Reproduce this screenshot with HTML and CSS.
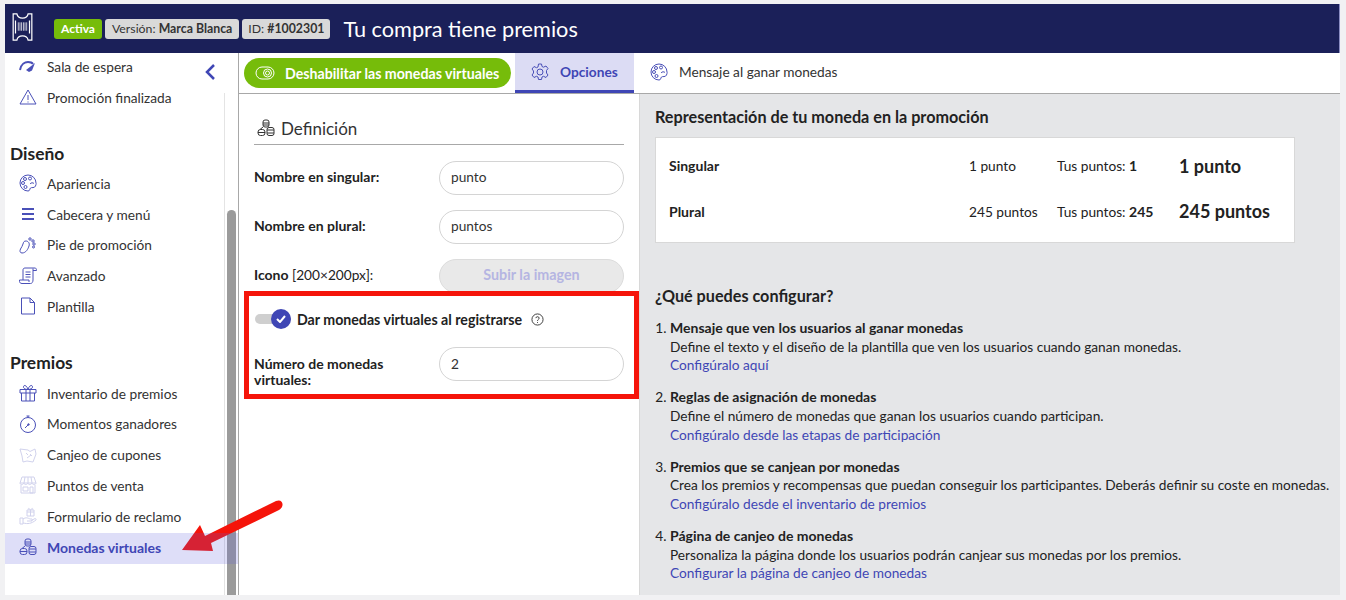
FILE: index.html
```html
<!DOCTYPE html>
<html lang="es">
<head>
    <meta charset="UTF-8">
    <title>Tu compra tiene premios</title>
    <link rel="stylesheet" href="styles.css">
</head>
<body>
    <!-- iconos reutilizados -->
    <svg class="sprite">
        <symbol id="i-coins" viewBox="0 0 18 18">
            <rect x="6" y="1" width="6" height="7" rx="2"/>
            <path d="M6 4h6M6 6h6"/>
            <rect x="1" y="10.500" width="7" height="6" rx="2.500"/>
            <path d="M1 13.500h7"/>
            <rect x="10" y="8.500" width="7" height="8" rx="2"/>
            <path d="M10 11h7M10 14h7M3 10.500 6 8"/>
        </symbol>
        <symbol id="i-palette" viewBox="0 0 18 18">
            <path d="M9 1a8 8 0 1 0 0 16c2 0 1.500-2 2.500-3s4 .5 5-2 .5-3 .5-3a8 8 0 0 0-8-8z"/>
            <circle cx="6" cy="5" r="1.500"/>
            <circle cx="11" cy="4.500" r="1.500"/>
            <circle cx="4" cy="9" r="1.500"/>
            <circle cx="6.500" cy="13" r="1.500"/>
            <path d="M11 10c1-1.500 3-1.500 4-.5"/>
        </symbol>
    </svg>

    <div class="page">
        <!-- Cabecera -->
        <header class="topbar">
            <svg class="logo" viewBox="0 0 22 30">
                <path d="M1 1h4c.5 3 3 4.500 6 4.500S16.500 4 17 1h4v28h-4c-.5-3-3-4.500-6-4.500S5.500 26 5 29H1z"/>
                <path d="M3.500 8v14M18.500 8v14"/>
                <path class="bars" d="M6.500 10v9M8.300 10v9M10 10v9M12 10v9M13.700 10v9M15.500 10v9"/>
            </svg>
            <span class="badge badge-green">Activa</span>
            <span class="badge">Versión: <b>Marca Blanca</b></span>
            <span class="badge badge-id">ID: <b>#1002301</b></span>
            <h1 class="title">Tu compra tiene premios</h1>
        </header>

        <div class="main">
            <!-- Menú lateral -->
            <nav class="sidebar">
                <div class="rail"></div>
                <div class="thumb"></div>
                <svg class="collapse" viewBox="0 0 12 18"><path d="M10 2 3 9l7 7"/></svg>

                <a class="item">
                    <svg class="icon" viewBox="0 0 18 18"><path class="thick" d="M1 13C2 7 6 5 9 5c2 0 4 .5 5 2"/><path class="solid" d="M7 13l9-7-3 7.500-3 1.500z"/></svg>
                    Sala de espera
                </a>
                <a class="item">
                    <svg class="icon" viewBox="0 0 18 18"><path d="M9 2 1 16h16zM9 7v5M9 13.500v1"/></svg>
                    Promoción finalizada
                </a>

                <h2 class="group">Diseño</h2>
                <a class="item">
                    <svg class="icon"><use href="#i-palette"/></svg>
                    Apariencia
                </a>
                <a class="item">
                    <svg class="icon icon-bold" viewBox="0 0 18 18"><path d="M3 4h12M3 9h12M3 14h12"/></svg>
                    Cabecera y menú
                </a>
                <a class="item">
                    <svg class="icon" viewBox="0 0 18 18"><path d="M3 17c-2 0-2.500-2-1.500-4s2-3 2.500-5 1-3 3-3 4 2 3 5-3 7-7 7z"/><circle cx="11" cy="3" r="1.200"/><circle cx="14" cy="5" r="1.200"/><circle cx="15" cy="8" r="1.200"/><circle cx="14.500" cy="11" r="1"/></svg>
                    Pie de promoción
                </a>
                <a class="item">
                    <svg class="icon" viewBox="0 0 18 18"><path d="M4 13V3c0-1 .5-2 2-2h10c1 0 1.500 1 1.500 2.500H14M14 1.500V13c0 2-1 3.500-2.500 3.500H3c-1.500 0-2.500-1-2.500-2V13H10v2M6.500 5h5M6.500 7.500h5M6.500 10h5"/></svg>
                    Avanzado
                </a>
                <a class="item">
                    <svg class="icon" viewBox="0 0 18 18"><path d="M2.500 1H11l4.500 4.500V17h-13zM11 1v4.500h4.500"/></svg>
                    Plantilla
                </a>

                <h2 class="group group-last">Premios</h2>
                <a class="item">
                    <svg class="icon" viewBox="0 0 18 18"><path d="M1 5.500h16v3.500H1zM2.500 9v8h13V9M7 5.500V17M11 5.500V17M9 5.500C7 5.500 4 4.500 4.500 2.500S8 1.500 9 5.500zM9 5.500c2 0 5-1 4.500-3S10 1.500 9 5.500z"/></svg>
                    Inventario de premios
                </a>
                <a class="item">
                    <svg class="icon" viewBox="0 0 18 18"><circle cx="9" cy="10" r="7.500"/><path d="M7.500 1h3M9 1v1.500M6 13l4-4"/><circle cx="9.500" cy="9.500" r=".8"/></svg>
                    Momentos ganadores
                </a>
                <a class="item item-faded">
                    <svg class="icon" viewBox="0 0 18 18"><path d="M1 3l8 1 2 1.500L16 3l1 5-3 8-6-1-4 1-1-6zM7 7l2 2M11 8l2 2M8 12l4-3"/></svg>
                    Canjeo de cupones
                </a>
                <a class="item item-faded">
                    <svg class="icon" viewBox="0 0 18 18"><path d="M3 1h12l2 6H1zM1 7c0 2 3 2 4 0 0 2 3 2 4 0 0 2 3 2 4 0 0 2 4 2 4 0M2 9v8h14V9M4 11h5v4H4zM11 11h3v6h-3zM6 1 5 7M9 1v6M12 1l1 6"/></svg>
                    Puntos de venta
                </a>
                <a class="item item-faded">
                    <svg class="icon" viewBox="0 0 18 18"><path d="M1 11h3v6H1zM4 12c3-2 5-1 7 0h2c1 1 0 2-1 2H8M4 16c5 1 8 1 13-3 .5-1-.5-2-2-1l-3 2M8 3h7v6H8zM11.500 3v6M8 5h7M11.500 3C10 1 9 1 9.500 2.500M11.500 3c1.500-2 2.500-2 2-.5"/></svg>
                    Formulario de reclamo
                </a>
                <a class="item item-active">
                    <svg class="icon"><use href="#i-coins"/></svg>
                    Monedas virtuales
                </a>
            </nav>

            <section class="content">
                <!-- Pestañas -->
                <div class="tabs">
                    <button class="toggle-btn">
                        <svg viewBox="0 0 20 14"><rect x="1" y="1" width="18" height="12" rx="6"/><circle cx="12.500" cy="7" r="4"/><circle cx="12.500" cy="7" r="2"/></svg>
                        Deshabilitar las monedas virtuales
                    </button>
                    <a class="tab tab-active">
                        <svg class="tab-icon" viewBox="0 0 18 18"><path d="M7.500 1h3l.5 2.500 1.500.7L15 3l2 2.500-1.500 2v2.500l1.500 2-2 2.500-2.500-1.200-1.500.7-.5 2.500h-3L7 14l-1.500-.7L3 14.500 1 12l1.500-2V8L1 6l2-2.500 2.500 1.200L7 4z"/><circle cx="9" cy="9" r="3"/></svg>
                        Opciones
                    </a>
                    <a class="tab">
                        <svg class="tab-icon"><use href="#i-palette"/></svg>
                        Mensaje al ganar monedas
                    </a>
                </div>

                <div class="columns">
                    <!-- Columna del formulario -->
                    <div class="form-col">
                        <h3 class="form-title">
                            <svg class="title-icon"><use href="#i-coins"/></svg>
                            Definición
                        </h3>
                        <div class="field">
                            <label class="field-label">Nombre en singular:</label>
                            <div class="input">punto</div>
                        </div>
                        <div class="field">
                            <label class="field-label">Nombre en plural:</label>
                            <div class="input">puntos</div>
                        </div>
                        <div class="field">
                            <label class="field-label">Icono <span class="hint">[200×200px]:</span></label>
                            <div class="upload">Subir la imagen</div>
                        </div>

                        <!-- Recuadro rojo de la captura -->
                        <div class="highlight">
                            <div class="switch-row">
                                <span class="switch">
                                    <span class="knob">
                                        <svg viewBox="0 0 10 8"><path d="M1 4l3 3 5-6"/></svg>
                                    </span>
                                </span>
                                <strong>Dar monedas virtuales al registrarse</strong>
                                <svg class="help" viewBox="0 0 14 14"><circle cx="7" cy="7" r="6"/><path d="M5.200 5.500C5.200 3.500 8.800 3.500 8.800 5.500 8.800 7 7 6.800 7 8.500M7 9.800v1"/></svg>
                            </div>
                            <div class="field field-last">
                                <label class="field-label">Número de monedas virtuales:</label>
                                <div class="input">2</div>
                            </div>
                        </div>
                    </div>

                    <!-- Columna de información -->
                    <div class="info-col">
                        <h3 class="info-title">Representación de tu moneda en la promoción</h3>
                        <div class="preview">
                            <div class="preview-row">
                                <b class="preview-name">Singular</b>
                                <span class="preview-plain">1 punto</span>
                                <span class="preview-user">Tus puntos: <b>1</b></span>
                                <span class="preview-big">1 punto</span>
                            </div>
                            <div class="preview-row">
                                <b class="preview-name">Plural</b>
                                <span class="preview-plain">245 puntos</span>
                                <span class="preview-user">Tus puntos: <b>245</b></span>
                                <span class="preview-big">245 puntos</span>
                            </div>
                        </div>

                        <h3 class="help-title">¿Qué puedes configurar?</h3>
                        <ol class="steps">
                            <li>
                                <b>Mensaje que ven los usuarios al ganar monedas</b>
                                <p>Define el texto y el diseño de la plantilla que ven los usuarios cuando ganan monedas.</p>
                                <a>Configúralo aquí</a>
                            </li>
                            <li>
                                <b>Reglas de asignación de monedas</b>
                                <p>Define el número de monedas que ganan los usuarios cuando participan.</p>
                                <a>Configúralo desde las etapas de participación</a>
                            </li>
                            <li>
                                <b>Premios que se canjean por monedas</b>
                                <p>Crea los premios y recompensas que puedan conseguir los participantes. Deberás definir su coste en monedas.</p>
                                <a>Configúralo desde el inventario de premios</a>
                            </li>
                            <li>
                                <b>Página de canjeo de monedas</b>
                                <p>Personaliza la página donde los usuarios podrán canjear sus monedas por los premios.</p>
                                <a>Configurar la página de canjeo de monedas</a>
                            </li>
                        </ol>
                    </div>
                </div>
            </section>
        </div>

        <!-- Flecha roja de la captura -->
        <svg class="arrow" viewBox="0 0 110 70">
            <path d="M2 53 20 28 25 39 96 4C103 1 105 10 99 13L31 46 33 54z"/>
        </svg>
    </div>
</body>
</html>
```

FILE: styles.css
```css
/* Página */
* {
    box-sizing: border-box;
}

body {
    margin: 0;
    background: #f1f1f3;
    color: #222;
    font-family: "Lato", "Noto Sans", sans-serif;
    font-size: 13.7px;
    overflow: hidden;
}

b,
strong {
    font-size: 14px;
}

.sprite {
    display: none;
}

.page {
    position: relative;
    width: 1346px;
    height: 600px;
    padding: 4px 6px 5px 5px;
    display: flex;
    flex-direction: column;
}

/* Cabecera */
.topbar {
    height: 49px;
    flex: none;
    background: #1b2059;
    border-right: 1px solid #8b8dc4;
    display: flex;
    align-items: center;
    padding-left: 7px;
}

.logo {
    width: 21px;
    height: 28px;
    margin: 0 21px 3px 0;
    fill: none;
    stroke: #fff;
    stroke-width: 1.3;
}

.bars {
    stroke-width: .8;
}

.badge {
    height: 20px;
    line-height: 20px;
    padding: 0 7px;
    margin-right: 3px;
    border-radius: 3px;
    background: #d9d9d9;
    color: #333;
    font-size: 12.300px;
    white-space: nowrap;
}

.badge b {
    font-size: 12.300px;
}

.badge-id {
    padding: 0 6px;
}

.badge-green {
    background: #76bc0a;
    color: #fff;
    font-size: 12px;
    font-weight: 700;
}

.title {
    margin: 0 0 0 10px;
    color: #fff;
    font-size: 21.700px;
    font-weight: 400;
}

.main {
    flex: 1;
    display: flex;
    min-height: 0;
    background: #fff;
}

/* Menú lateral */
.sidebar {
    position: relative;
    width: 234px;
    flex: none;
    border-right: 1px solid #a8a8a8;
    overflow: hidden;
}

.rail {
    position: absolute;
    left: 219px;
    top: 40px;
    bottom: 0;
    width: 1px;
    background: #e4e4e4;
}

.thumb {
    position: absolute;
    left: 222px;
    top: 157px;
    bottom: 0;
    width: 9px;
    background: #9b9b9b;
    border-radius: 5px 5px 0 0;
}

.collapse {
    position: absolute;
    left: 199px;
    top: 10px;
    width: 12px;
    height: 18px;
    fill: none;
    stroke: #3f46b5;
    stroke-width: 2.500;
}

.item {
    position: relative;
    z-index: 1;
    display: flex;
    align-items: center;
    height: 30.750px;
    padding: 0 0 2px 14px;
    color: #333;
}

.item:first-of-type {
    margin-top: -1px;
}

.icon {
    width: 18px;
    height: 18px;
    margin-right: 10px;
    flex: none;
    fill: none;
    stroke: #4a50b8;
    stroke-width: 1;
}

.icon-bold {
    stroke-width: 2;
}

.thick {
    stroke-width: 2;
}

.solid {
    fill: #4a50b8;
    stroke: none;
}

.item-faded .icon {
    opacity: .25;
}

.item-active {
    height: 31.500px;
    background: rgba(88, 88, 222, .2);
    color: #3f46b5;
    font-size: 14px;
    font-weight: 700;
}

.group {
    margin: 25.500px 0 0 5px;
    height: 30px;
    line-height: 30px;
    font-size: 17.400px;
    font-weight: 700;
    color: #222;
}

.group-last {
    margin-top: 26px;
    line-height: 28px;
}

/* Pestañas */
.content {
    flex: 1;
    min-width: 0;
    display: flex;
    flex-direction: column;
}

.tabs {
    height: 41px;
    flex: none;
    display: flex;
    border-bottom: 1px solid #a8a8a8;
    padding-left: 5px;
}

.toggle-btn {
    height: 30px;
    width: 267px;
    margin: 5px 4px 0 0;
    border: none;
    border-radius: 16px;
    background: #76bc0a;
    color: #fff;
    font: 700 14.200px "Lato", "Noto Sans", sans-serif;
    display: flex;
    align-items: center;
    padding-left: 11px;
    gap: 10px;
}

.toggle-btn svg {
    width: 20px;
    height: 14px;
    fill: none;
    stroke: #fff;
    stroke-width: 1;
}

.tab {
    display: flex;
    align-items: center;
    gap: 11px;
    padding: 0 15px 3px 16px;
    height: 40px;
    color: #333;
}

.tab-active {
    padding-bottom: 0;
    background: #dcdcf4;
    border-bottom: 3px solid #3f46b5;
    color: #3f46b5;
    font-weight: 700;
    width: 119px;
}

.tab-icon {
    width: 18px;
    height: 18px;
    fill: none;
    stroke: #4a50b8;
    stroke-width: 1;
}

.columns {
    flex: 1;
    display: flex;
    min-height: 0;
}

/* Formulario */
.form-col {
    width: 401px;
    flex: none;
    border-right: 1px solid #d8d8d8;
    padding: 0 15px;
}

.form-title {
    margin: 23px 0 16px;
    height: 28px;
    border-bottom: 1px solid #a8a8a8;
    font-size: 17px;
    font-weight: 400;
    color: #333;
    display: flex;
    align-items: flex-start;
    gap: 6px;
    padding-left: 3px;
    line-height: 24px;
}

.title-icon {
    width: 18px;
    height: 18px;
    margin-top: 2px;
    fill: none;
    stroke: #333;
    stroke-width: 1;
}

.field {
    display: flex;
    align-items: center;
    height: 34px;
    margin-bottom: 15px;
}

.field-label {
    width: 185px;
    flex: none;
    font-size: 14px;
    font-weight: 700;
    padding: 0 30px 2px 0;
    line-height: 16px;
}

.hint {
    font-size: 13.700px;
    font-weight: 400;
}

.input {
    flex: 1;
    height: 34px;
    line-height: 30px;
    border: 1px solid #d4d4d4;
    border-radius: 17px;
    padding-left: 11px;
    color: #333;
}

.upload {
    flex: 1;
    height: 34px;
    line-height: 30px;
    border: 1px solid #dcdcdc;
    border-radius: 17px;
    background: #e9e9e9;
    color: #b5b5e2;
    font-size: 14.300px;
    font-weight: 700;
    text-align: center;
}

/* Recuadro rojo */
.highlight {
    position: relative;
    margin: -17px -15px 0 -10px;
    height: 108px;
    border: 5px solid #f5140a;
    padding: 0 10px 0 5px;
    background: #fff;
}

.switch-row {
    display: flex;
    align-items: center;
    height: 46px;
}

.switch-row strong {
    font-size: 14.200px;
}

.switch {
    width: 36px;
    height: 10px;
    flex: none;
    border-radius: 5px;
    background: #cfcfcf;
    display: flex;
    justify-content: flex-end;
    align-items: center;
    margin-right: 6px;
    margin-left: 1px;
}

.knob {
    width: 20px;
    height: 20px;
    flex: none;
    border-radius: 50%;
    background: #3f46b5;
    display: flex;
    align-items: center;
    justify-content: center;
}

.knob svg {
    width: 10px;
    height: 8px;
    fill: none;
    stroke: #fff;
    stroke-width: 2;
}

.help {
    width: 13px;
    height: 13px;
    margin-left: 9px;
    fill: none;
    stroke: #333;
    stroke-width: 1;
}

.field-last {
    align-items: flex-start;
    margin: 5px 0 0;
}

.field-last .field-label {
    padding-top: 9px;
}

.field-last .input {
    line-height: 32px;
}

/* Columna de información */
.info-col {
    flex: 1;
    min-width: 0;
    background: #e5e6e8;
    padding: 0 0 0 15px;
}

.info-title {
    margin: 13px 0 11px;
    height: 19px;
    line-height: 19px;
    font-size: 16.200px;
    font-weight: 700;
    color: #222;
}

.preview {
    width: 640px;
    height: 106px;
    background: #fff;
    border: 1px solid #d8d8d8;
    padding-top: 5px;
}

.preview-row {
    display: flex;
    align-items: center;
    height: 45.500px;
    padding-left: 13px;
}

.preview-name {
    width: 300px;
    flex: none;
}

.preview-plain {
    width: 88px;
    flex: none;
}

.preview-user {
    width: 122px;
    flex: none;
}

.preview-big {
    font-size: 18px;
    font-weight: 700;
}

.help-title {
    margin: 43px 0 13px;
    height: 20px;
    line-height: 20px;
    font-size: 16.200px;
    font-weight: 700;
    color: #222;
}

.steps {
    margin: 0;
    padding: 0 0 0 15px;
    line-height: 18.700px;
}

.steps li {
    margin-bottom: 13.200px;
}

.steps p {
    margin: 0;
}

.steps a {
    color: #3f46b5;
}

/* Flecha */
.arrow {
    position: absolute;
    left: 180px;
    top: 497px;
    width: 110px;
    height: 70px;
    fill: #f5140a;
}
```
